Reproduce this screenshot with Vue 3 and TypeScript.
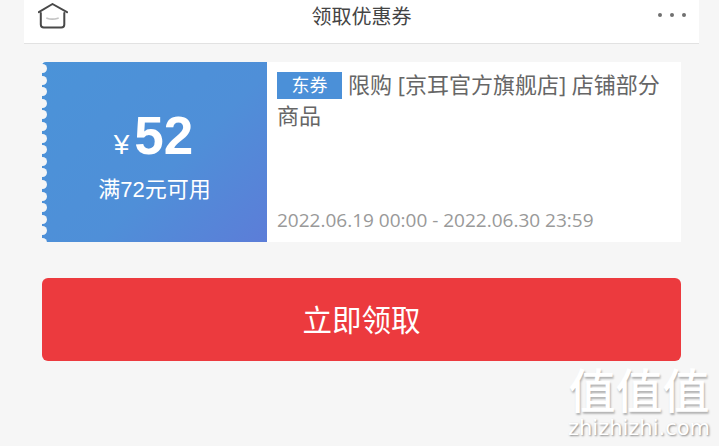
<script setup lang="ts">
const scallops = 16
</script>

<template>
  <div class="page">
    <header class="bar">
      <svg class="home" width="30" height="26" viewBox="0 0 30 26" fill="none">
        <path d="M0.800 9.200 14.500 1 29 9.200" stroke="#484848" stroke-width="2" stroke-linecap="round" stroke-linejoin="round" />
        <path d="M2.800 10v11.500a3 3 0 0 0 3 3h17.500a3 3 0 0 0 3-3V10" stroke="#484848" stroke-width="2" stroke-linecap="round" />
        <path d="M9 15.200c3 1.200 7.500 1.200 11 0" stroke="#c4c4c4" stroke-width="1.700" stroke-linecap="round" />
      </svg>
      <h1 class="title">领取优惠券</h1>
      <div class="more"><i></i><i></i><i></i></div>
    </header>

    <main class="content">
      <section class="coupon">
        <div class="value">
          <div class="edge"><b v-for="n in scallops" :key="n"></b></div>
          <div class="amount"><span class="yen">¥</span><strong>52</strong></div>
          <div class="cond">满72元可用</div>
        </div>
        <div class="info">
          <p class="desc"><span class="tag">东券</span>限购 [京耳官方旗舰店] 店铺部分商品</p>
          <p class="date">2022.06.19 00:00 - 2022.06.30 23:59</p>
        </div>
      </section>
      <button class="claim" type="button">立即领取</button>
    </main>

    <div class="mark">
      <div class="mark-cn">值值值</div>
      <div class="mark-en">zhizhizhi.com</div>
    </div>
  </div>
</template>

<style>
html, body { margin: 0; background: #f6f6f6; }
</style>

<style scoped>
.page {
  position: relative;
  width: 719px;
  height: 446px;
  overflow: hidden;
  background: #f6f6f6;
  font-family: "Open Sans", "Noto Sans CJK SC", sans-serif;
}
.bar {
  display: grid;
  grid-template-columns: 1fr auto 1fr;
  align-items: start;
  box-sizing: border-box;
  width: 675px;
  height: 44px;
  margin-left: 24px;
  padding: 0 13px;
  background: #fff;
  border-bottom: 1px solid #e2e2e2;
}
.home { margin: 3px 0 0 1px; }
.title {
  margin: 2px 0 0;
  font-size: 20px;
  line-height: 28px;
  font-weight: 400;
  color: #444;
  font-family: "Noto Sans CJK SC", sans-serif;
}
.more { display: flex; justify-content: flex-end; gap: 8px; margin-top: 13px; }
.more i { width: 4px; height: 4px; border-radius: 50%; background: #707070; }
.content {
  display: flex;
  flex-direction: column;
  gap: 36px;
  padding: 18px 38px 0 42px;
}
.coupon { display: flex; height: 180px; background: #fff; }
.value {
  position: relative;
  width: 225px;
  flex: none;
  display: flex;
  flex-direction: column;
  align-items: center;
  border-radius: 4px 0 0 4px;
  background: linear-gradient(135deg, #4b93d8 0%, #4f8fd8 58%, #5c7dd8 100%);
  color: #fff;
}
.edge {
  position: absolute;
  left: 0;
  top: 2px;
  display: flex;
  flex-direction: column;
  gap: 2.600px;
}
.edge b {
  display: block;
  width: 9px;
  height: 9px;
  margin-left: -4.500px;
  border-radius: 50%;
  background: #f6f6f6;
}
.amount {
  display: flex;
  align-items: baseline;
  margin-top: 41px;
  height: 66px;
  line-height: 66px;
  font-family: "Liberation Sans", sans-serif;
}
.yen { font-size: 28px; margin: 0 5px 0 -2px; }
.amount strong { font-size: 53px; font-weight: 700; }
.cond {
  margin-top: 6px;
  font-size: 22px;
  line-height: 30px;
  font-family: "Liberation Sans", "Noto Sans CJK SC", sans-serif;
}
.info {
  flex: 1;
  display: flex;
  flex-direction: column;
  justify-content: space-between;
  padding: 7px 10px 8px;
  min-width: 0;
}
.desc {
  margin: 0;
  font-size: 22px;
  line-height: 31px;
  color: #666;
}
.tag {
  display: inline-block;
  width: 65px;
  height: 27px;
  line-height: 27px;
  margin-right: 6px;
  text-align: center;
  font-size: 18px;
  color: #fff;
  background: #4b90d8;
  vertical-align: 1px;
}
.date {
  margin: 0;
  font-size: 19px;
  line-height: 28px;
  color: #999;
  white-space: nowrap;
}
.claim {
  height: 83px;
  padding: 0 0 4px;
  border: 0;
  border-radius: 6px;
  background: #ec3a3e;
  color: #fff;
  font-size: 29.500px;
  font-family: "Noto Sans CJK SC", sans-serif;
}
.mark {
  position: absolute;
  left: 566px;
  top: 361px;
  width: 146px;
  text-align: center;
  color: #fff;
  pointer-events: none;
}
.mark-cn {
  font-size: 47px;
  line-height: 54px;
  font-family: "Noto Sans CJK SC", sans-serif;
  font-weight: 500;
  text-shadow: 1px 2px 2px rgba(0, 0, 0, 0.28);
}
.mark-en {
  margin-top: 1px;
  font-size: 21px;
  line-height: 24px;
  font-family: "DejaVu Sans", sans-serif;
  text-shadow: 1px 1px 2px rgba(0, 0, 0, 0.45);
  white-space: nowrap;
}
</style>
